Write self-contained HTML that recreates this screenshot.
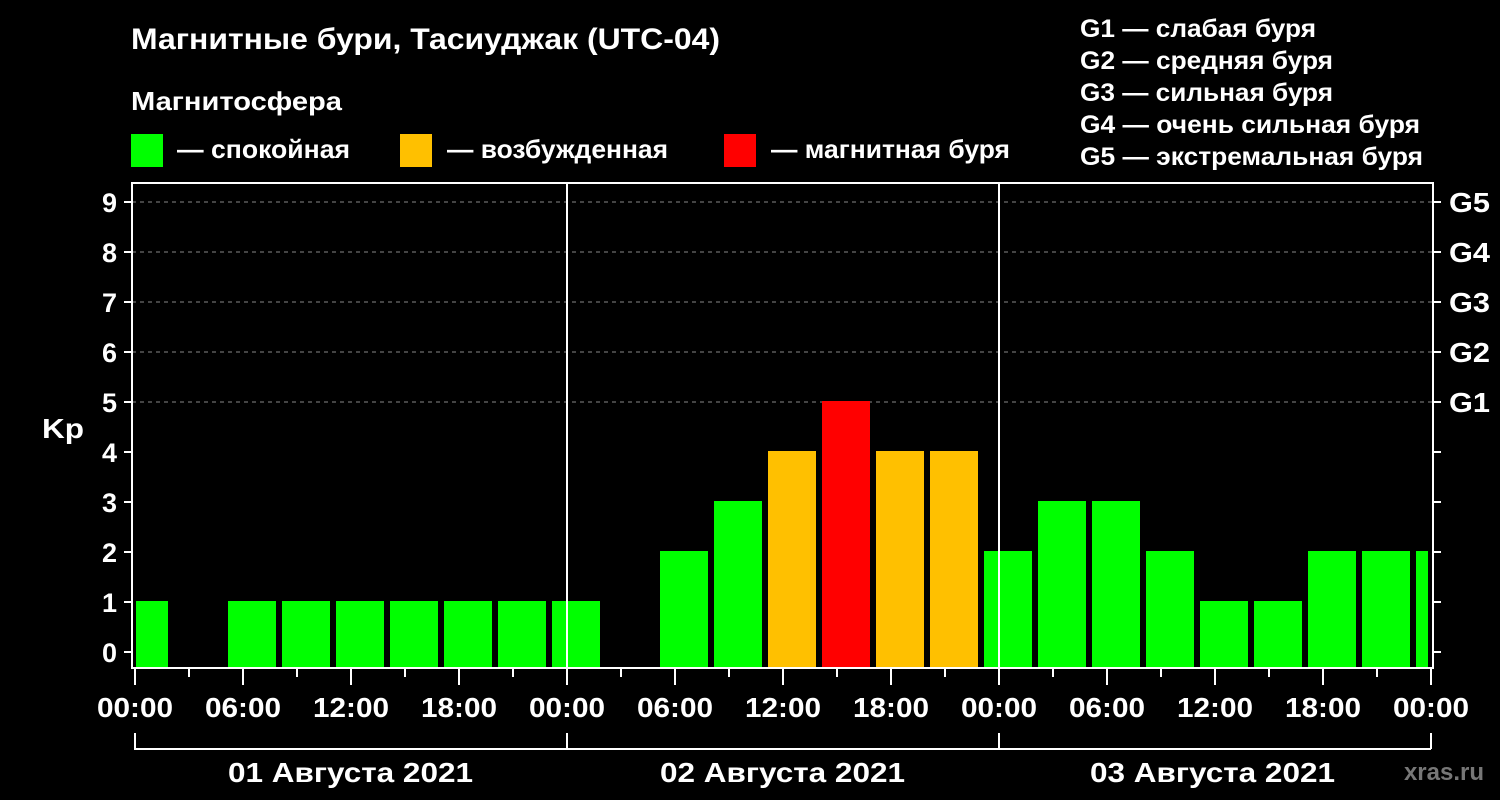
<!DOCTYPE html><html><head><meta charset="utf-8"><style>body{margin:0;background:#000}svg{display:block}text{font-family:"Liberation Sans",Arial,sans-serif;font-weight:bold;fill:#fff}</style></head><body>
<svg width="1500" height="800" viewBox="0 0 1500 800">
<rect width="1500" height="800" fill="#000"/>
<text x="131" y="49" font-size="30" textLength="589" lengthAdjust="spacingAndGlyphs">Магнитные бури, Тасиуджак (UTC-04)</text>
<text x="131" y="110" font-size="26" textLength="211" lengthAdjust="spacingAndGlyphs">Магнитосфера</text>
<rect x="131" y="134" width="32" height="33" fill="#00ff00"/>
<text x="177" y="158" font-size="26" textLength="173" lengthAdjust="spacingAndGlyphs">— спокойная</text>
<rect x="400" y="134" width="32" height="33" fill="#ffc000"/>
<text x="447" y="158" font-size="26" textLength="221" lengthAdjust="spacingAndGlyphs">— возбужденная</text>
<rect x="724" y="134" width="32" height="33" fill="#ff0000"/>
<text x="771" y="158" font-size="26" textLength="239" lengthAdjust="spacingAndGlyphs">— магнитная буря</text>
<g font-size="25">
<text x="1080" y="37" textLength="236" lengthAdjust="spacingAndGlyphs">G1 — слабая буря</text>
<text x="1080" y="69" textLength="253" lengthAdjust="spacingAndGlyphs">G2 — средняя буря</text>
<text x="1080" y="101" textLength="253" lengthAdjust="spacingAndGlyphs">G3 — сильная буря</text>
<text x="1080" y="133" textLength="340" lengthAdjust="spacingAndGlyphs">G4 — очень сильная буря</text>
<text x="1080" y="165" textLength="343" lengthAdjust="spacingAndGlyphs">G5 — экстремальная буря</text>
</g>
<g stroke="#888" stroke-dasharray="4,4" stroke-width="1">
<line x1="132" y1="202" x2="1433" y2="202"/><line x1="132" y1="252" x2="1433" y2="252"/><line x1="132" y1="302" x2="1433" y2="302"/><line x1="132" y1="352" x2="1433" y2="352"/><line x1="132" y1="402" x2="1433" y2="402"/>
</g>
<g>
<rect x="136" y="601" width="32" height="67" fill="#00ff00"/>
<rect x="228" y="601" width="48" height="67" fill="#00ff00"/>
<rect x="282" y="601" width="48" height="67" fill="#00ff00"/>
<rect x="336" y="601" width="48" height="67" fill="#00ff00"/>
<rect x="390" y="601" width="48" height="67" fill="#00ff00"/>
<rect x="444" y="601" width="48" height="67" fill="#00ff00"/>
<rect x="498" y="601" width="48" height="67" fill="#00ff00"/>
<rect x="552" y="601" width="48" height="67" fill="#00ff00"/>
<rect x="660" y="551" width="48" height="117" fill="#00ff00"/>
<rect x="714" y="501" width="48" height="167" fill="#00ff00"/>
<rect x="768" y="451" width="48" height="217" fill="#ffc000"/>
<rect x="822" y="401" width="48" height="267" fill="#ff0000"/>
<rect x="876" y="451" width="48" height="217" fill="#ffc000"/>
<rect x="930" y="451" width="48" height="217" fill="#ffc000"/>
<rect x="984" y="551" width="48" height="117" fill="#00ff00"/>
<rect x="1038" y="501" width="48" height="167" fill="#00ff00"/>
<rect x="1092" y="501" width="48" height="167" fill="#00ff00"/>
<rect x="1146" y="551" width="48" height="117" fill="#00ff00"/>
<rect x="1200" y="601" width="48" height="67" fill="#00ff00"/>
<rect x="1254" y="601" width="48" height="67" fill="#00ff00"/>
<rect x="1308" y="551" width="48" height="117" fill="#00ff00"/>
<rect x="1362" y="551" width="48" height="117" fill="#00ff00"/>
<rect x="1416" y="551" width="12" height="117" fill="#00ff00"/>
</g>
<g stroke="#fff" stroke-width="2" fill="none">
<rect x="132" y="183" width="1301" height="485"/>
<line x1="567" y1="183" x2="567" y2="668"/><line x1="999" y1="183" x2="999" y2="668"/>
<path d="M124 652h8M124 602h8M124 552h8M124 502h8M124 452h8M124 402h8M124 352h8M124 302h8M124 252h8M124 202h8"/>
<path d="M1433 652h8M1433 602h8M1433 552h8M1433 502h8M1433 452h8M1433 402h8M1433 352h8M1433 302h8M1433 252h8M1433 202h8"/>
<path d="M135 668v17M243 668v17M351 668v17M459 668v17M567 668v17M675 668v17M783 668v17M891 668v17M999 668v17M1107 668v17M1215 668v17M1323 668v17M1431 668v17"/>
<path d="M189 668v9M297 668v9M405 668v9M513 668v9M621 668v9M729 668v9M837 668v9M945 668v9M1053 668v9M1161 668v9M1269 668v9M1377 668v9"/>
<path d="M135 733v16H1431M567 733v16M999 733v16M1431 733v16"/>
</g>
<g font-size="27" text-anchor="end">
<text x="117" y="662">0</text><text x="117" y="612">1</text><text x="117" y="562">2</text><text x="117" y="512">3</text><text x="117" y="462">4</text><text x="117" y="412">5</text><text x="117" y="362">6</text><text x="117" y="312">7</text><text x="117" y="262">8</text><text x="117" y="212">9</text>
</g>
<text x="42" y="438" font-size="28" textLength="42" lengthAdjust="spacingAndGlyphs">Kp</text>
<g font-size="28">
<text x="1449" y="412" textLength="41" lengthAdjust="spacingAndGlyphs">G1</text><text x="1449" y="362" textLength="41" lengthAdjust="spacingAndGlyphs">G2</text><text x="1449" y="312" textLength="41" lengthAdjust="spacingAndGlyphs">G3</text><text x="1449" y="262" textLength="41" lengthAdjust="spacingAndGlyphs">G4</text><text x="1449" y="212" textLength="41" lengthAdjust="spacingAndGlyphs">G5</text>
</g>
<g font-size="28">
<text x="97" y="717" textLength="76" lengthAdjust="spacingAndGlyphs">00:00</text><text x="205" y="717" textLength="76" lengthAdjust="spacingAndGlyphs">06:00</text><text x="313" y="717" textLength="76" lengthAdjust="spacingAndGlyphs">12:00</text><text x="421" y="717" textLength="76" lengthAdjust="spacingAndGlyphs">18:00</text><text x="529" y="717" textLength="76" lengthAdjust="spacingAndGlyphs">00:00</text><text x="637" y="717" textLength="76" lengthAdjust="spacingAndGlyphs">06:00</text><text x="745" y="717" textLength="76" lengthAdjust="spacingAndGlyphs">12:00</text><text x="853" y="717" textLength="76" lengthAdjust="spacingAndGlyphs">18:00</text><text x="961" y="717" textLength="76" lengthAdjust="spacingAndGlyphs">00:00</text><text x="1069" y="717" textLength="76" lengthAdjust="spacingAndGlyphs">06:00</text><text x="1177" y="717" textLength="76" lengthAdjust="spacingAndGlyphs">12:00</text><text x="1285" y="717" textLength="76" lengthAdjust="spacingAndGlyphs">18:00</text><text x="1393" y="717" textLength="76" lengthAdjust="spacingAndGlyphs">00:00</text>
<text x="228" y="782" textLength="245" lengthAdjust="spacingAndGlyphs">01 Августа 2021</text><text x="660" y="782" textLength="245" lengthAdjust="spacingAndGlyphs">02 Августа 2021</text><text x="1090" y="782" textLength="245" lengthAdjust="spacingAndGlyphs">03 Августа 2021</text>
</g>
<text x="1484" y="780" font-size="24" text-anchor="end" style="fill:#777">xras.ru</text>
</svg></body></html>
